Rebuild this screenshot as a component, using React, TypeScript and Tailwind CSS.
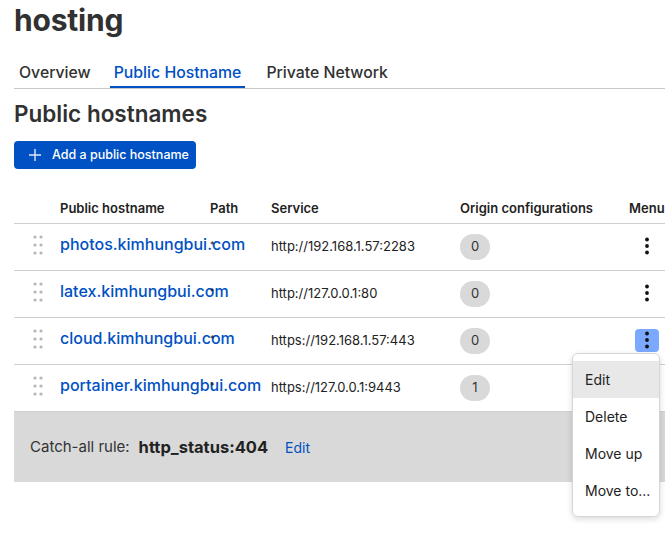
import React from 'react';

const rows = [
  { host: 'photos.kimhungbui.com', service: 'http://192.168.1.57:2283', count: 0 },
  { host: 'latex.kimhungbui.com', service: 'http://127.0.0.1:80', count: 0 },
  { host: 'cloud.kimhungbui.com', service: 'https://192.168.1.57:443', count: 0, open: true },
  { host: 'portainer.kimhungbui.com', service: 'https://127.0.0.1:9443', count: 1 },
];

const cols = 'grid grid-cols-[46px_150px_61px_189px_169px_60px]';

const DragHandle = () => (
  <svg width="10" height="20" viewBox="0 0 10 20" className="text-[#b5b5b5]">
    {[2, 10, 18].map((y) =>
      [2, 8].map((x) => <circle key={`${x}-${y}`} cx={x} cy={y} r="1.6" fill="currentColor" />)
    )}
  </svg>
);

const Kebab = ({ active }: { active?: boolean }) => (
  <div
    className={`flex h-[23px] w-[24px] items-center justify-center rounded-[4px] ${
      active ? 'bg-[#7aa9ff]' : ''
    }`}
  >
    <svg width="4" height="18" viewBox="0 0 4 18">
      <circle cx="2" cy="2.5" r="1.9" fill="#111" />
      <circle cx="2" cy="9" r="1.9" fill="#111" />
      <circle cx="2" cy="15.5" r="1.9" fill="#111" />
    </svg>
  </div>
);

// menu opened from the cloud row
const Dropdown = () => (
  <div className="absolute left-[558px] top-[35px] z-10 w-[88px] whitespace-nowrap rounded-[6px] border border-[#d6d6d6] bg-white py-[7px] text-[14px] text-[#222] shadow-[0_2px_6px_rgba(0,0,0,0.15)]">
    {['Edit', 'Delete', 'Move up', 'Move to...'].map((item, i) => (
      <div
        key={item}
        className={`flex h-[37px] items-center px-[12px] ${i === 0 ? 'bg-[#e8e8e8]' : ''}`}
      >
        {item}
      </div>
    ))}
  </div>
);

export default function App() {
  return (
    <div className="w-[665px] overflow-hidden bg-white pb-[60px] font-['Inter',sans-serif] text-[#313131]">
      <div className="pl-[14px]">
        <h1 className="pt-[1px] text-[30px] font-bold leading-[38px] tracking-[-0.2px]">hosting</h1>

        <div className="mt-[24px] flex border-b border-[#c8c8c8] text-[15.8px] font-medium leading-[20px]">
          <div className="px-[5px] pb-[5px]">Overview</div>
          <div className="ml-[14px] border-b-2 border-[#0051c3] px-[4px] pb-[3px] text-[#0051c3]">Public Hostname</div>
          <div className="ml-[17px] px-[4px] pb-[5px]">Private Network</div>
        </div>

        <h2 className="mt-[11px] text-[22.5px] font-semibold leading-[28px]">Public hostnames</h2>

        <button className="mt-[13px] flex h-[28px] w-[182px] items-center gap-[10px] rounded-[4px] bg-[#0051c3] pl-[14px] text-[12.5px] font-medium text-white">
          <svg width="14" height="14" viewBox="0 0 14 14" stroke="#dfe8f7" strokeWidth="1.4">
            <path d="M7 1v12M1 7h12" />
          </svg>
          Add a public hostname
        </button>

        <div className="mt-[27px] w-[700px]">
          <div className={`${cols} h-[28px] border-b border-[#cfcfcf] text-[13px] font-semibold leading-[24px] text-[#222]`}>
            <div />
            <div>Public hostname</div>
            <div>Path</div>
            <div>Service</div>
            <div>Origin configurations</div>
            <div>Menu</div>
          </div>

          {rows.map((r) => (
            <div key={r.host} className={`${cols} relative h-[47px] items-center border-b border-[#cfcfcf]`}>
              <div className="flex justify-center pl-[2px] pb-[4px]">
                <DragHandle />
              </div>
              <div className="whitespace-nowrap pb-[6px] text-[16px] font-medium text-[#0051c3]">{r.host}</div>
              <div className="pb-[6px] text-[9px] leading-none text-[#111]">*</div>
              <div className="text-[13px] text-[#222]">{r.service}</div>
              <div>
                <span className="flex h-[26px] w-[30px] items-center justify-center rounded-full bg-[#d9d9d9] text-[13px] text-[#333]">
                  {r.count}
                </span>
              </div>
              <div className="flex pl-[6px] pb-[2px]">
                <Kebab active={r.open} />
              </div>
              {r.open && <Dropdown />}
            </div>
          ))}

          <div className="flex h-[70px] items-center bg-[#d9d9d9] pl-[16px] text-[15px] text-[#333]">
            <span>Catch-all rule:</span>
            <span className="ml-[9px] text-[16.5px] font-bold text-[#222]">http_status:404</span>
            <span className="ml-[17px] text-[14px] text-[#0051c3]">Edit</span>
          </div>
        </div>
      </div>
    </div>
  );
}
